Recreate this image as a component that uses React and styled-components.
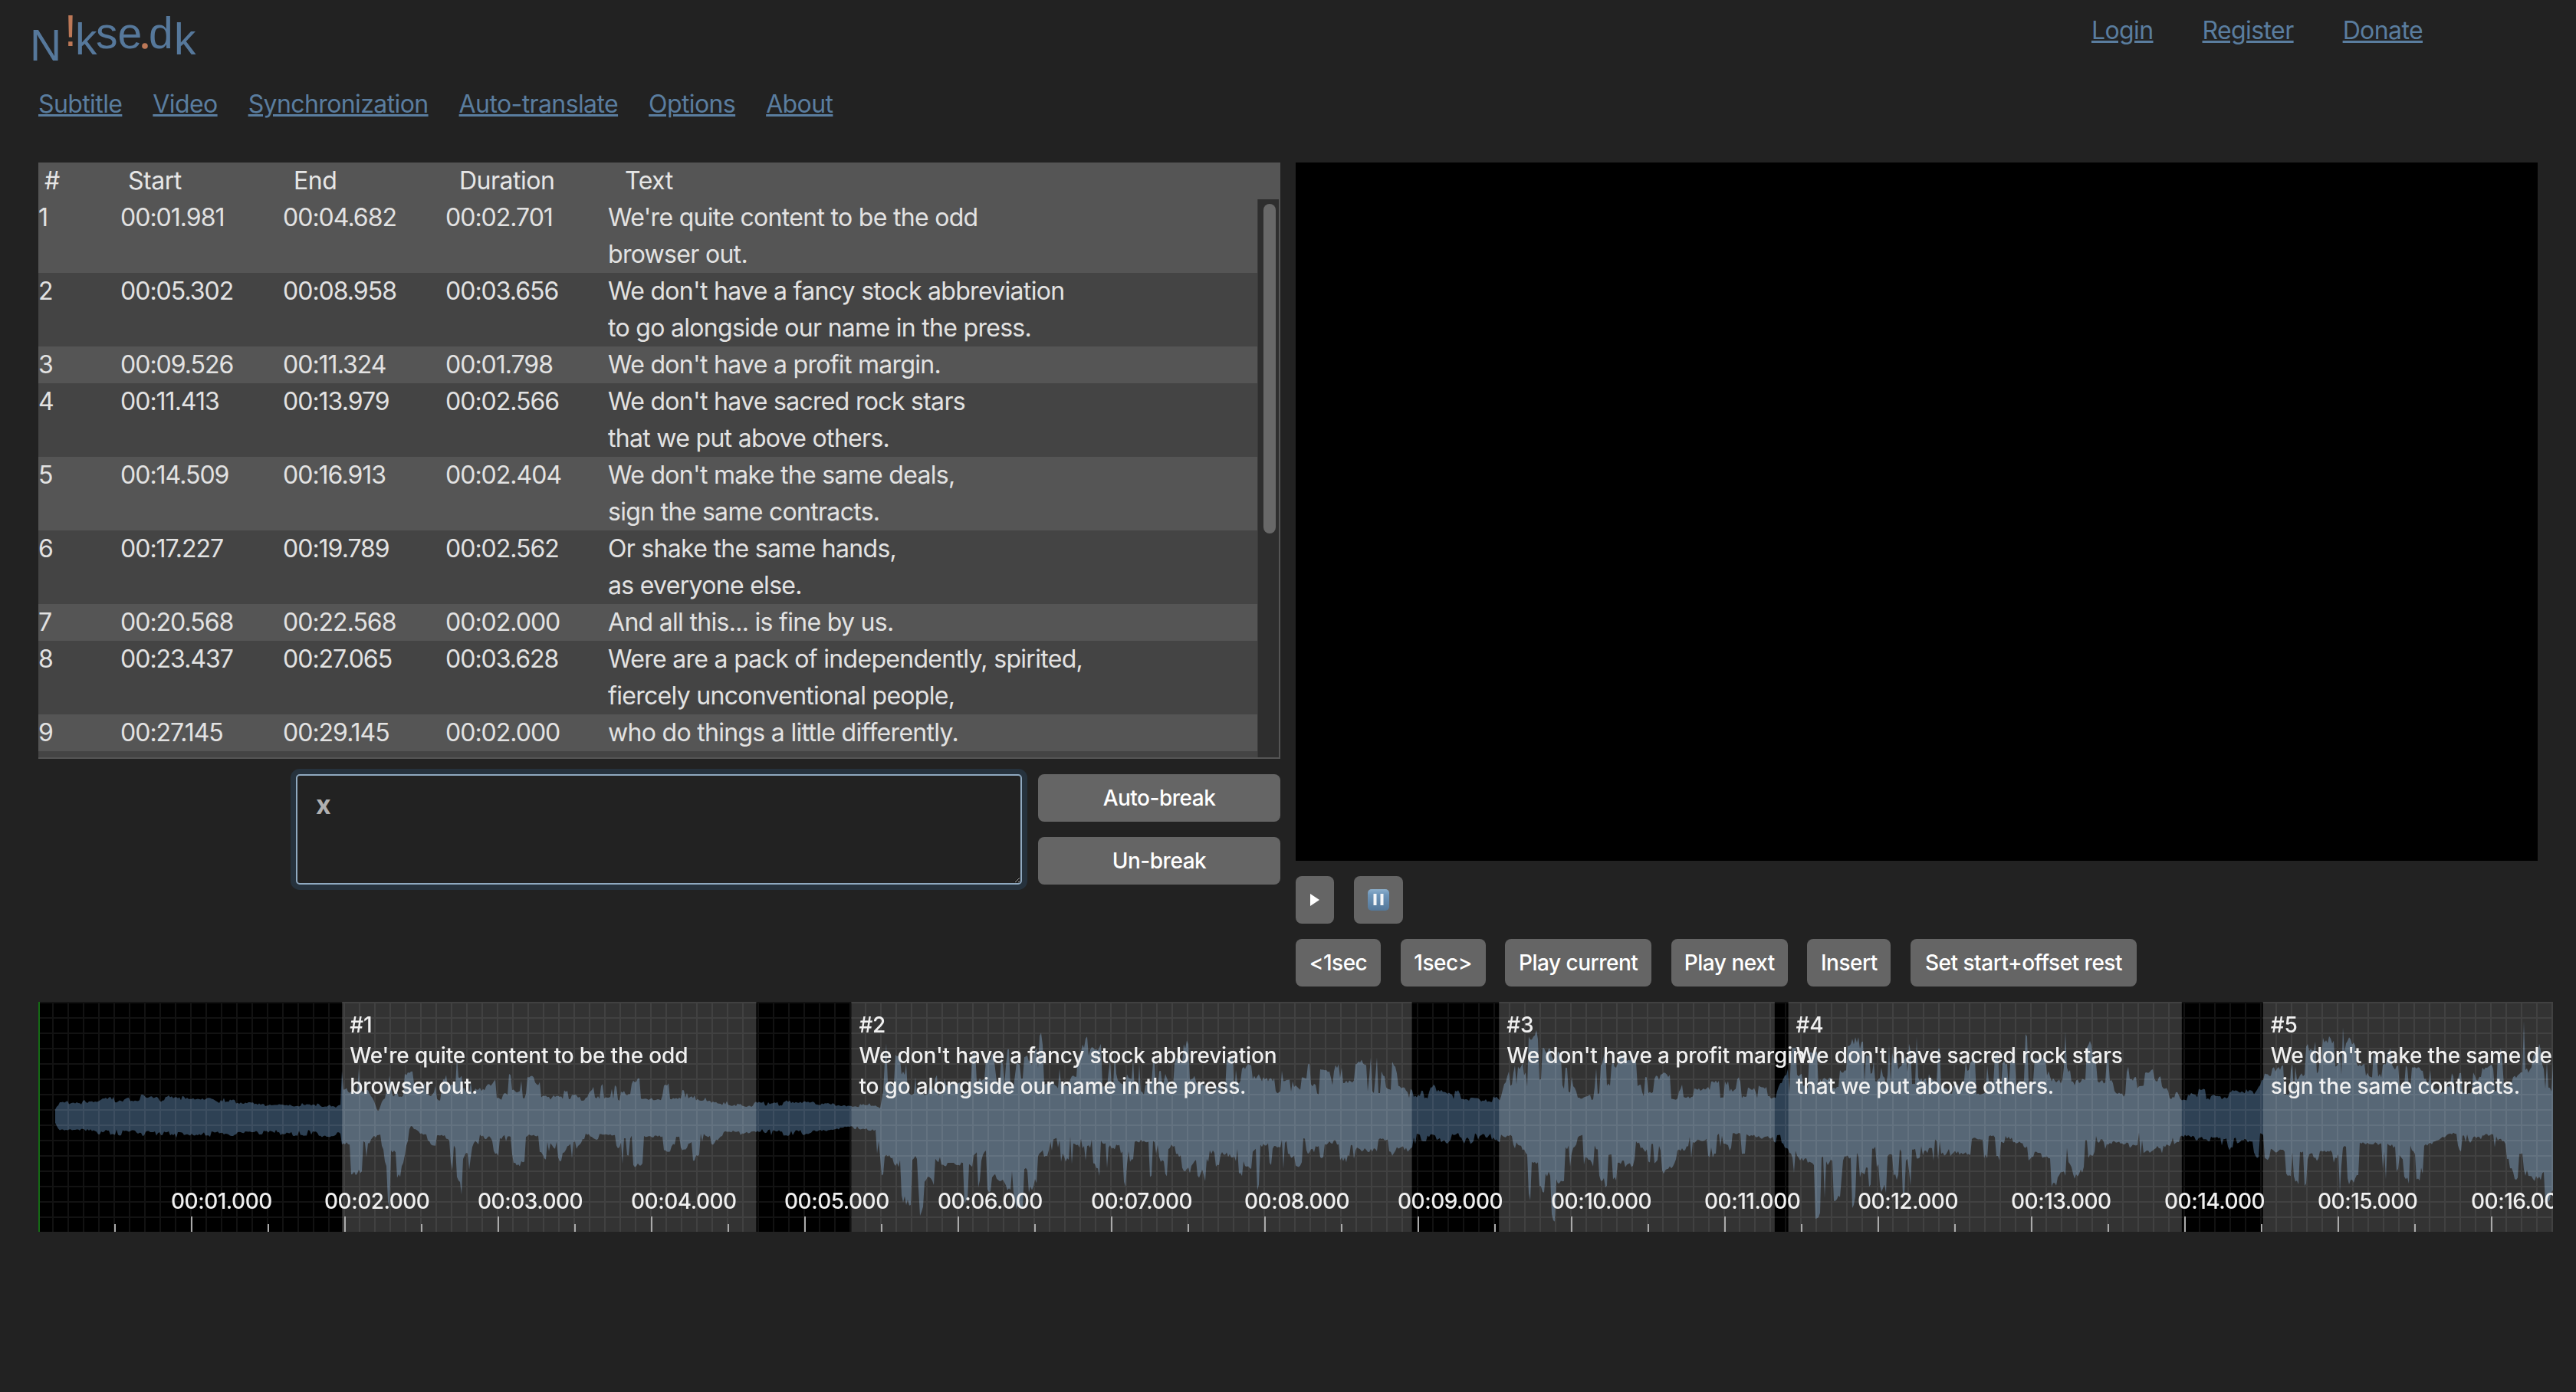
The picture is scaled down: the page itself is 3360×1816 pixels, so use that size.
import React from 'react';
import styled, { createGlobalStyle } from 'styled-components';

const GlobalStyle = createGlobalStyle`
  html, body {
    margin: 0;
    padding: 0;
    background-color: #222;
    overflow: hidden;
  }
  body {
    color: #ddd;
    font-family: Inter, "Liberation Sans", sans-serif;
    font-size: 32px;
  }
`;

const Page = styled.div`
  width: 3360px;
  height: 1816px;
  display: flex;
  flex-direction: column;
`;

const Header = styled.header`
  display: flex;
  justify-content: space-between;
  height: 92px;
`;

const Logo = styled.svg`
  width: 280px;
  height: 92px;
  font-family: "Liberation Sans", Arial, sans-serif;
  font-size: 57px;
`;

const TopLinks = styled.nav`
  display: flex;
  column-gap: 64px;
  padding: 16px 200px 0 0;
  height: 48px;
`;

const Link = styled.a`
  color: #5a7d9f;
  text-decoration: underline;
  line-height: 48px;
  letter-spacing: -0.6px;
  cursor: pointer;
`;

const Menu = styled.nav`
  display: flex;
  column-gap: 40px;
  padding: 20px 50px 0;
  height: 48px;
`;

const Main = styled.main`
  display: grid;
  grid-template-columns: 1620px 1620px;
  column-gap: 20px;
  padding: 52px 50px 0;
`;

const LeftColumn = styled.section`
  display: flex;
  flex-direction: column;
`;

const SubtitleTable = styled.div`
  display: flex;
  flex-direction: column;
  height: 778px;
  line-height: 48px;
`;

const TableHead = styled.div`
  display: grid;
  grid-template-columns: 109px 216px 216px 216px 1fr;
  height: 48px;
  padding-left: 8px;
  background-color: #555;
  color: #e6e6e6;
  letter-spacing: -0.5px;
`;

const TableBody = styled.div`
  flex: 1;
  display: flex;
  min-height: 0;
  overflow: hidden;
  background-color: #444;
  border-right: 2px solid #555;
  border-bottom: 2px solid #555;
`;

const Rows = styled.div`
  flex: 1;
`;

const Row = styled.div`
  display: grid;
  grid-template-columns: 107px 212px 212px 212px 1fr;
  background-color: ${(props) => (props.$odd ? '#555' : '#444')};
  color: #e2e2e2;
`;

const TimeCell = styled.div`
  letter-spacing: -1px;
`;

const RowText = styled.div`
  white-space: pre-line;
  letter-spacing: -0.7px;
`;

const ScrollTrack = styled.div`
  width: 28px;
  box-sizing: border-box;
  padding: 6px 4px 0 7px;
  background-color: #2e2e2e;
  border-left: 1px solid #3a3a3a;
`;

const ScrollThumb = styled.div`
  height: 430px;
  border-radius: 8px;
  background-color: #686868;
`;

const EditorRow = styled.div`
  display: flex;
  justify-content: flex-end;
  column-gap: 21px;
  margin-top: 20px;
`;

const Editor = styled.textarea`
  box-sizing: border-box;
  width: 947px;
  height: 144px;
  padding: 14px 24px;
  border: 2px solid #8fa9c0;
  border-radius: 5px;
  outline: none;
  box-shadow: 0 0 0 7px #26323d;
  background-color: #222;
  color: #b0b0b0;
  font-family: Inter, "Liberation Sans", sans-serif;
  font-size: 34px;
  font-weight: 700;
  line-height: 48px;
`;

const EditorButtons = styled.div`
  display: flex;
  flex-direction: column;
  row-gap: 20px;
  width: 316px;
`;

const Button = styled.button`
  display: flex;
  align-items: center;
  justify-content: center;
  box-sizing: border-box;
  height: 62px;
  width: ${(props) => props.$width || '100%'};
  padding: 0;
  border: none;
  border-radius: 8px;
  background-color: #656565;
  color: #fff;
  font-family: Inter, "Liberation Sans", sans-serif;
  font-size: 28px;
  font-weight: 500;
  letter-spacing: -0.5px;
  white-space: nowrap;
`;

const RightColumn = styled.section`
  display: flex;
  flex-direction: column;
  row-gap: 20px;
`;

const Video = styled.div`
  height: 911px;
  background-color: #000;
`;

const Controls = styled.div`
  display: flex;
  column-gap: 25.6px;
`;

const WaveWrap = styled.div`
  margin: 20px 0 0 50px;
  width: 3280px;
  height: 300px;
  overflow: hidden;
`;

const WaveSvg = styled.svg`
  display: block;
  filter: blur(0.6px);
  font-family: Inter, "Liberation Sans", sans-serif;
  font-size: 28px;
  font-weight: 500;
`;

const WaveText = styled.text`
  fill: #f0f0f0;
  letter-spacing: ${(props) => props.$spacing || '-0.15px'};
`;

const rows = [
  ['00:01.981', '00:04.682', '00:02.701', "We're quite content to be the odd\nbrowser out."],
  ['00:05.302', '00:08.958', '00:03.656', "We don't have a fancy stock abbreviation\nto go alongside our name in the press."],
  ['00:09.526', '00:11.324', '00:01.798', "We don't have a profit margin."],
  ['00:11.413', '00:13.979', '00:02.566', "We don't have sacred rock stars\nthat we put above others."],
  ['00:14.509', '00:16.913', '00:02.404', "We don't make the same deals,\nsign the same contracts."],
  ['00:17.227', '00:19.789', '00:02.562', 'Or shake the same hands,\nas everyone else.'],
  ['00:20.568', '00:22.568', '00:02.000', 'And all this... is fine by us.'],
  ['00:23.437', '00:27.065', '00:03.628', 'Were are a pack of independently, spirited,\nfiercely unconventional people,'],
  ['00:27.145', '00:29.145', '00:02.000', 'who do things a little differently.'],
];

const regions = [
  [1.981, 4.682, ["We're quite content to be the odd", 'browser out.']],
  [5.302, 8.958, ["We don't have a fancy stock abbreviation", 'to go alongside our name in the press.']],
  [9.526, 11.324, ["We don't have a profit margin."]],
  [11.413, 13.979, ["We don't have sacred rock stars", 'that we put above others.']],
  [14.509, 16.913, ["We don't make the same deals,", 'sign the same contracts.']],
];

const transport = [
  ['<1sec', '111px'],
  ['1sec>', '111px'],
  ['Play current', '191px'],
  ['Play next', '152px'],
  ['Insert', '109px'],
  ['Set start+offset rest', '295px'],
];

// x (page px), amplitude above centre, amplitude below centre
const envelope = [
  [72, 12, 12], [79, 22, 20], [135, 28, 24], [237, 32, 30], [332, 21, 25], [444, 19, 28],
  [446, 88, 95], [458, 88, 92], [479, 65, 88], [493, 8, 35], [507, 65, 128], [521, 68, 132],
  [535, 65, 15], [563, 38, 48], [584, 78, 52], [605, 100, 142], [619, 65, 48], [647, 65, 52],
  [675, 65, 75], [703, 55, 48], [732, 52, 95], [760, 28, 32], [788, 67, 68], [816, 55, 65],
  [844, 65, 68], [886, 52, 68], [914, 32, 55], [942, 22, 28], [986, 20, 24], [1047, 24, 27],
  [1110, 18, 19], [1142, 18, 19], [1149, 12, 132], [1156, 108, 135], [1191, 80, 145],
  [1226, 75, 110], [1261, 85, 122], [1296, 105, 100], [1342, 120, 142], [1381, 108, 60],
  [1416, 112, 80], [1458, 110, 100], [1493, 85, 85], [1535, 112, 105], [1563, 110, 95],
  [1591, 80, 80], [1633, 85, 112], [1661, 85, 88], [1703, 88, 78], [1731, 75, 68],
  [1773, 88, 82], [1816, 78, 72], [1842, 36, 48], [1872, 46, 36], [1956, 26, 38],
  [1970, 80, 60], [2001, 115, 135], [2029, 110, 150], [2061, 30, 60], [2096, 100, 108],
  [2138, 72, 92], [2200, 52, 62], [2267, 62, 62], [2315, 36, 42], [2341, 108, 110],
  [2385, 105, 150], [2437, 115, 108], [2496, 118, 110], [2548, 85, 65], [2600, 85, 65],
  [2666, 138, 100], [2703, 120, 90], [2740, 125, 62], [2770, 70, 58], [2807, 72, 62],
  [2846, 30, 36], [2866, 44, 38], [2940, 38, 52], [2952, 72, 66], [2984, 80, 90],
  [3006, 125, 135], [3058, 125, 100], [3095, 110, 82], [3154, 105, 105], [3199, 82, 60],
  [3250, 80, 58], [3288, 128, 125], [3310, 128, 150], [3330, 80, 135],
];

const random = (seed) => () => {
  seed = (seed * 1664525 + 1013904223) % 4294967296;
  return seed / 4294967296;
};

const ampAt = (x) => {
  let i = 0;
  while (i < envelope.length - 2 && envelope[i + 1][0] < x) i++;
  const [x0, t0, b0] = envelope[i];
  const [x1, t1, b1] = envelope[i + 1];
  const f = Math.min(1, Math.max(0, (x - x0) / (x1 - x0)));
  return [t0 + (t1 - t0) * f, b0 + (b1 - b0) * f];
};

// blocks of uneven height with thin spikes, the quiet parts stay flatter
const buildWave = () => {
  const rand = random(42);
  const top = [];
  const bottom = [];
  let holdTop = 0;
  let holdBottom = 0;
  let levelTop = 0.5;
  let levelBottom = 0.5;
  const spike = (amp, level) => {
    const loud = Math.min(1, Math.max(0, (amp - 30) / 30));
    const floor = 0.72 - loud * 0.34;
    const fast = 0.88 + rand() * 0.12;
    return amp * (floor + (1 - floor) * level) * fast;
  };
  for (let x = 72; x <= 3330; x += 2) {
    if (holdTop-- <= 0) {
      holdTop = Math.floor(rand() * rand() * 9);
      levelTop = rand() ** 1.6;
    }
    if (holdBottom-- <= 0) {
      holdBottom = Math.floor(rand() * rand() * 9);
      levelBottom = rand() ** 1.6;
    }
    const [t, b] = ampAt(x);
    top.push(`${x - 50},${(150 - spike(t, levelTop)).toFixed(1)}`);
    bottom.unshift(`${x - 50},${(150 + spike(b, levelBottom)).toFixed(1)}`);
  }
  return `M${top.join('L')}L${bottom.join('L')}Z`;
};

const wavePath = buildWave();
const toX = (seconds) => seconds * 200;
const pad = (n) => String(n).padStart(2, '0');

const Waveform = () => (
  <WaveSvg width="3280" height="300" viewBox="0 0 3280 300">
    <defs>
      <pattern id="grid" x="18" y="0" width="20" height="20" patternUnits="userSpaceOnUse">
        <path d="M0 0H20V2H2V20H0Z" fill="rgba(255,255,255,0.07)" />
      </pattern>
    </defs>
    <rect width="3280" height="300" fill="#000" />
    <path d={wavePath} fill="#2e4154" />
    {regions.map(([start, end]) => (
      <rect key={start} x={toX(start)} width={toX(end - start)} height="300" fill="rgba(255,255,255,0.2)" />
    ))}
    <rect width="3280" height="300" fill="url(#grid)" />
    <rect width="2" height="300" fill="#146a14" />
    {Array.from({ length: 33 }, (_, i) => (i + 1) * 0.5).map((s) => (
      <rect
        key={s}
        x={toX(s) - 1}
        y={Number.isInteger(s) ? 280 : 290}
        width="2"
        height={Number.isInteger(s) ? 20 : 10}
        fill="#aaa"
      />
    ))}
    {Array.from({ length: 16 }, (_, i) => i + 1).map((s) => (
      <WaveText key={s} x={toX(s) - 27} y="270" $spacing="-0.5px">{`00:${pad(s)}.000`}</WaveText>
    ))}
    {regions.map(([start, , lines], i) => (
      <g key={start}>
        <WaveText x={toX(start) + 10} y="40">{`#${i + 1}`}</WaveText>
        {lines.map((line, j) => (
          <WaveText key={line} x={toX(start) + 10} y={80 + j * 40}>{line}</WaveText>
        ))}
      </g>
    ))}
  </WaveSvg>
);

const NikseLogo = () => (
  <Logo viewBox="0 0 280 92">
    <text x="39" y="79" fill="#56789b">N</text>
    <text x="84" y="60" fill="#bd7857">!</text>
    <text x="98" y="71" fill="#56789b">k</text>
    <text x="125" y="63" fill="#56789b">se</text>
    <circle cx="189" cy="60" r="3.8" fill="#bd7857" />
    <text x="194" y="63" fill="#56789b">d</text>
    <text x="227" y="71" fill="#56789b">k</text>
  </Logo>
);

const PlayIcon = () => (
  <svg width="12" height="16" viewBox="0 0 12 16">
    <path d="M0 0L12 8L0 16Z" fill="#fff" />
  </svg>
);

const PauseIcon = () => (
  <svg width="28" height="28" viewBox="0 0 28 28">
    <defs>
      <linearGradient id="pauseFill" x1="0" y1="0" x2="0" y2="1">
        <stop offset="0" stopColor="#8db0cd" />
        <stop offset="0.25" stopColor="#6e96ba" />
        <stop offset="1" stopColor="#547799" />
      </linearGradient>
    </defs>
    <rect width="28" height="28" rx="5" fill="url(#pauseFill)" />
    <rect x="7.5" y="6" width="4" height="15" fill="#f4f6f8" />
    <rect x="16.5" y="6" width="4" height="15" fill="#f4f6f8" />
  </svg>
);

const App = () => (
  <Page>
    <GlobalStyle />
    <Header>
      <NikseLogo />
      <TopLinks>
        <Link>Login</Link>
        <Link>Register</Link>
        <Link>Donate</Link>
      </TopLinks>
    </Header>
    <Menu>
      <Link>Subtitle</Link>
      <Link>Video</Link>
      <Link>Synchronization</Link>
      <Link>Auto-translate</Link>
      <Link>Options</Link>
      <Link>About</Link>
    </Menu>
    <Main>
      <LeftColumn>
        <SubtitleTable>
          <TableHead>
            <div>#</div>
            <div>Start</div>
            <div>End</div>
            <div>Duration</div>
            <div>Text</div>
          </TableHead>
          <TableBody>
            <Rows>
              {rows.map(([start, end, duration, text], i) => (
                <Row key={start} $odd={i % 2 === 0}>
                  <TimeCell>{i + 1}</TimeCell>
                  <TimeCell>{start}</TimeCell>
                  <TimeCell>{end}</TimeCell>
                  <TimeCell>{duration}</TimeCell>
                  <RowText>{text}</RowText>
                </Row>
              ))}
            </Rows>
            <ScrollTrack>
              <ScrollThumb />
            </ScrollTrack>
          </TableBody>
        </SubtitleTable>
        <EditorRow>
          <Editor defaultValue="x" />
          <EditorButtons>
            <Button>Auto-break</Button>
            <Button>Un-break</Button>
          </EditorButtons>
        </EditorRow>
      </LeftColumn>
      <RightColumn>
        <Video />
        <Controls>
          <Button $width="50px">
            <PlayIcon />
          </Button>
          <Button $width="64px">
            <PauseIcon />
          </Button>
        </Controls>
        <Controls>
          {transport.map(([label, width]) => (
            <Button key={label} $width={width}>
              {label}
            </Button>
          ))}
        </Controls>
      </RightColumn>
    </Main>
    <WaveWrap>
      <Waveform />
    </WaveWrap>
  </Page>
);

export default App;
